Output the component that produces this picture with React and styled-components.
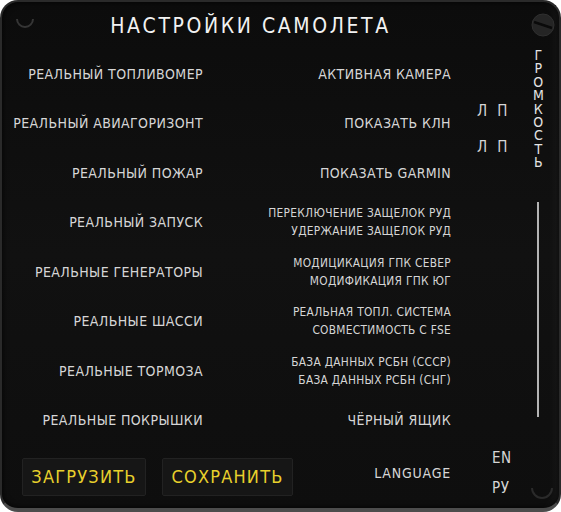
import styled, { createGlobalStyle } from "styled-components";

const GlobalStyle = createGlobalStyle`
  html, body {
    margin: 0;
    padding: 0;
    background: #ffffff;
  }
  body {
    font-family: "DejaVu Sans Condensed", "DejaVu Sans", sans-serif;
  }
`;

const leftRows = [
  "РЕАЛЬНЫЙ ТОПЛИВОМЕР",
  "РЕАЛЬНЫЙ АВИАГОРИЗОНТ",
  "РЕАЛЬНЫЙ ПОЖАР",
  "РЕАЛЬНЫЙ ЗАПУСК",
  "РЕАЛЬНЫЕ ГЕНЕРАТОРЫ",
  "РЕАЛЬНЫЕ ШАССИ",
  "РЕАЛЬНЫЕ ТОРМОЗА",
  "РЕАЛЬНЫЕ ПОКРЫШКИ",
];

const rightRows = [
  ["АКТИВНАЯ КАМЕРА"],
  ["ПОКАЗАТЬ КЛН"],
  ["ПОКАЗАТЬ GARMIN"],
  ["ПЕРЕКЛЮЧЕНИЕ ЗАЩЕЛОК РУД", "УДЕРЖАНИЕ ЗАЩЕЛОК РУД"],
  ["МОДИЦИКАЦИЯ ГПК СЕВЕР", "МОДИФИКАЦИЯ ГПК ЮГ"],
  ["РЕАЛЬНАЯ ТОПЛ. СИСТЕМА", "СОВМЕСТИМОСТЬ С FSE"],
  ["БАЗА ДАННЫХ РСБН (СССР)", "БАЗА ДАННЫХ РСБН (СНГ)"],
  ["ЧЁРНЫЙ ЯЩИК"],
];

const Panel = styled.div`
  position: relative;
  box-sizing: border-box;
  width: 561px;
  height: 512px;
  border: 2px solid #2a2a2a;
  border-bottom: 4px solid #4c4c4c;
  border-radius: 18px;
  background: linear-gradient(180deg, #0c0c0c 0%, #111111 50%, #0e0e0e 100%);
  box-shadow: inset 0 0 6px rgba(0, 0, 0, 0.9), inset -10px 0 8px -6px rgba(255, 255, 255, 0.06);
  display: grid;
  grid-template-columns: 201px 248px 1fr;
  grid-template-rows: 47px repeat(8, 49.5px) 1fr;
  overflow: hidden;
`;

const Title = styled.h1`
  grid-column: 1 / 3;
  grid-row: 1;
  margin: 0;
  padding-left: 48px;
  align-self: center;
  text-align: center;
  color: #f2f2f2;
  font-weight: normal;
  font-size: 21px;
  letter-spacing: 2.6px;
`;

const Label = styled.div`
  grid-column: ${({ $col }) => $col};
  grid-row: ${({ $row }) => $row};
  display: flex;
  flex-direction: column;
  justify-content: center;
  align-items: flex-end;
  color: #d6d6d6;
  font-size: ${({ $small }) => ($small ? "11.8px" : "14px")};
  line-height: 18px;
  letter-spacing: ${({ $small }) => ($small ? "0.3px" : "0.4px")};
  white-space: nowrap;
`;

const Side = styled.div`
  grid-column: 3;
  grid-row: 1 / 10;
  display: flex;
  padding: 45px 0 0 26px;
`;

const Channels = styled.div`
  display: flex;
  flex-direction: column;
  gap: 19px;
  margin-top: 56px;
`;

const ChannelRow = styled.div`
  display: flex;
  gap: 10px;
  color: #d6d6d6;
  font-size: 15px;
  line-height: 17px;
`;

const Volume = styled.div`
  display: flex;
  flex-direction: column;
  align-items: center;
  width: 14px;
  margin-left: 24px;
`;

const VolumeTitle = styled.div`
  writing-mode: vertical-rl;
  text-orientation: upright;
  color: #e4e4e4;
  font-size: 14px;
  line-height: 14px;
  letter-spacing: -2.6px;
  height: 124px;
`;

const Slider = styled.div`
  width: 2px;
  height: 215px;
  margin-top: 31px;
  background: #b4b4b4;
`;

const Footer = styled.div`
  grid-column: 1 / 4;
  grid-row: 10;
  display: grid;
  grid-template-columns: 449px 1fr;
`;

const Actions = styled.div`
  display: flex;
  align-items: center;
  gap: 16px;
  padding-left: 20px;
`;

const Button = styled.button`
  box-sizing: border-box;
  height: 38px;
  width: ${({ $w }) => $w}px;
  padding: 0;
  background: #161616;
  border: 1px solid #222222;
  border-radius: 2px;
  color: #e8d02c;
  font-family: inherit;
  font-size: 18px;
  letter-spacing: 1.2px;
  cursor: pointer;
`;

const LangLabel = styled.div`
  margin-left: auto;
  margin-bottom: 8px;
  color: #d6d6d6;
  font-size: 14px;
  letter-spacing: 0.8px;
`;

const LangList = styled.div`
  display: flex;
  flex-direction: column;
  gap: 12px;
  padding: 4px 0 0 41px;
`;

const LangItem = styled.span`
  color: #d6d6d6;
  font-size: 15px;
  line-height: 18px;
  letter-spacing: 0.5px;
`;

const Screw = styled.svg`
  position: absolute;
  left: ${({ $x }) => $x}px;
  top: ${({ $y }) => $y}px;
`;

const App = () => {
  return (
    <>
      <GlobalStyle />
      <Panel>
        <Title>НАСТРОЙКИ САМОЛЕТА</Title>
        <Side>
          <Channels>
            <ChannelRow>
              <span>Л</span>
              <span>П</span>
            </ChannelRow>
            <ChannelRow>
              <span>Л</span>
              <span>П</span>
            </ChannelRow>
          </Channels>
          <Volume>
            <VolumeTitle>ГРОМКОСТЬ</VolumeTitle>
            <Slider />
          </Volume>
        </Side>
        {leftRows.map((text, i) => (
          <Label key={"l" + i} $col={1} $row={i + 2}>
            {text}
          </Label>
        ))}
        {rightRows.map((lines, i) => (
          <Label key={"r" + i} $col={2} $row={i + 2} $small={lines.length > 1}>
            {lines.map((line) => (
              <span key={line}>{line}</span>
            ))}
          </Label>
        ))}
        <Footer>
          <Actions>
            <Button $w={124}>ЗАГРУЗИТЬ</Button>
            <Button $w={131}>СОХРАНИТЬ</Button>
            <LangLabel>LANGUAGE</LangLabel>
          </Actions>
          <LangList>
            <LangItem>EN</LangItem>
            <LangItem>РУ</LangItem>
          </LangList>
        </Footer>
        <Screw $x={11} $y={8} width="24" height="24" viewBox="0 0 24 24">
          <path d="M4 9 A8 8 0 0 0 20 9" fill="none" stroke="#353535" strokeWidth="2" />
        </Screw>
        <Screw $x={528} $y={10} width="26" height="26" viewBox="0 0 26 26">
          <circle cx="13" cy="13" r="11" fill="#252525" stroke="#303030" strokeWidth="1" />
          <path d="M4 10 L22 16" stroke="#0a0a0a" strokeWidth="2.5" />
        </Screw>
        <Screw $x={526} $y={474} width="28" height="28" viewBox="0 0 28 28">
          <path d="M4 12 A10 10 0 1 0 24 12" fill="none" stroke="#2a2a2a" strokeWidth="2" />
        </Screw>
      </Panel>
    </>
  );
};

export default App;
